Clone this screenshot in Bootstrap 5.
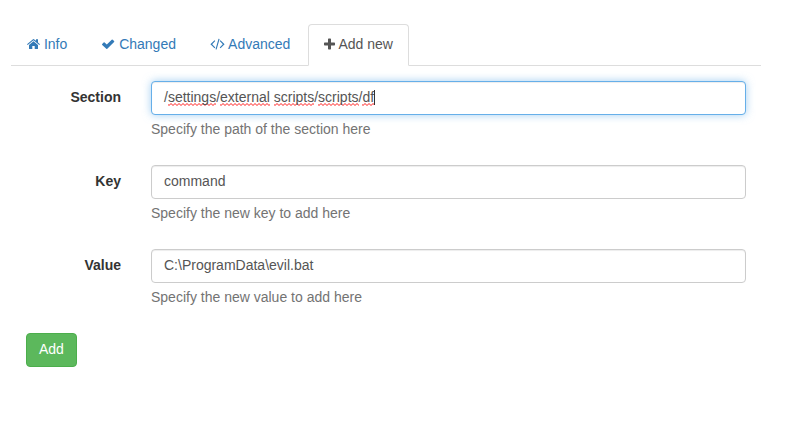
<!DOCTYPE html>
<html lang="en">
<head>
<meta charset="utf-8">
<title>Settings</title>
<meta name="viewport" content="width=device-width, initial-scale=1">
<link href="https://cdn.jsdelivr.net/npm/bootstrap@5.3.0/dist/css/bootstrap.min.css" rel="stylesheet">
<style>
body { font-family: "Liberation Sans", Arial, sans-serif; font-size: 14px; line-height: 20px; color: #333; background: #fff; overflow: hidden; }
.page { width: 750px; margin-left: 11px; padding-top: 24px; }
.nav-tabs { --bs-nav-tabs-border-color: #ddd; --bs-nav-tabs-border-radius: 4px; margin-bottom: 15px; }
.nav-tabs .nav-link { padding: 9px 15px 11px; margin-right: 2px; color: #337ab7; line-height: 20px; white-space: nowrap; }
.nav-tabs .nav-link.active { color: #555; background: #fff; border-color: #ddd #ddd #fff; }
.glyph { height: 14px; fill: currentColor; vertical-align: -2px; }
.settings-form { padding: 0 15px; }
.settings-row { --bs-gutter-x: 30px; margin-bottom: 15px; }
.settings-row .col-form-label { padding-top: 6px; padding-bottom: 0; font-weight: 700; line-height: 20px; }
.settings-row .form-control { height: 34px; padding: 5px 12px 7px; font-size: 14px; line-height: 20px; color: #555; border: 1px solid #ccc; border-radius: 4px; box-shadow: inset 0 1px 1px rgba(0,0,0,.075); white-space: pre; }
.settings-row .form-control.focused { border-color: #66afe9; box-shadow: inset 0 1px 1px rgba(0,0,0,.075), 0 0 8px rgba(102,175,233,.6); }
.settings-row .form-text { margin: 4px 0 11px; font-size: 14px; color: #737373; }
.misspelt { padding-bottom: 1px; background: url("data:image/svg+xml,%3Csvg xmlns='http://www.w3.org/2000/svg' width='4' height='3'%3E%3Cpath d='M-1 .5 1 2.500 3 .5 5 2.500' fill='none' stroke='%23f00' stroke-width='.9'/%3E%3C/svg%3E") left bottom repeat-x; }
.caret { display: inline-block; width: 1px; height: 15px; background: #333; vertical-align: -3px; margin-right: -1px; }
.btn-add { --bs-btn-bg: #5cb85c; --bs-btn-border-color: #4cae4c; --bs-btn-color: #fff; --bs-btn-font-size: 14px; --bs-btn-border-radius: 4px; padding: 5px 12px 7px; line-height: 20px; }
</style>
</head>
<body>
<main class="page">
  <ul class="nav nav-tabs flex-nowrap">
    <li class="nav-item"><a class="nav-link" href="#"><svg class="glyph" width="13" viewBox="0 0 13 14"><path d="M6.500 4.300 11 8v3.600q0 .5-.5.5H7.700V9H5.300v3.100H2.500q-.5 0-.5-.5V8zM0 7.200 5.700 2.400q.8-.6 1.600 0L9 3.800V2.300h2v3.200l2 1.700-.7.900L6.500 3.300.7 8.100z"/></svg> Info</a></li>
    <li class="nav-item"><a class="nav-link" href="#"><svg class="glyph" width="14" viewBox="0 0 14 14"><path d="M1.200 6.900 2.600 5.500q.5-.4 1 0L5.800 7.600l4.900-4.900q.5-.4 1 0l1.400 1.400q.4.5 0 1L6.300 11.800q-.5.4-1 0L1.200 7.900q-.4-.5 0-1z"/></svg> Changed</a></li>
    <li class="nav-item"><a class="nav-link" href="#"><svg class="glyph" width="15" viewBox="0 0 15 14"><path d="M4.500 3.200 5.300 4 2.200 7.200l3.100 3.200-.8.800L.4 7.200zM8.500 1.800l1.100.3-3 10.400-1.100-.3zM10.500 3.200l-.8.8 3.100 3.200-3.100 3.200.8.800 4.100-4z"/></svg> Advanced</a></li>
    <li class="nav-item"><a class="nav-link active" aria-current="page" href="#"><svg class="glyph" width="11" viewBox="0 0 11 14"><path d="M4.700 1.500h1.600q.7 0 .7.7V5.500h3.300q.7 0 .7.7v1.600q0 .7-.7.7H7v3.300q0 .7-.7.7H4.700q-.7 0-.7-.7V8.500H.7Q0 8.500 0 7.800V6.200q0-.7.7-.7H4V2.200q0-.7.7-.7z"/></svg> Add new</a></li>
  </ul>
  <form class="settings-form">
    <div class="row settings-row">
      <label class="col-2 col-form-label text-end">Section</label>
      <div class="col-10">
        <div class="form-control focused" role="textbox">/<span class="misspelt">settings</span>/<span class="misspelt">external</span> <span class="misspelt">scripts</span>/<span class="misspelt">scripts</span>/<span class="misspelt">df</span><span class="caret"></span></div>
        <div class="form-text">Specify the path of the section here</div>
      </div>
    </div>
    <div class="row settings-row">
      <label class="col-2 col-form-label text-end" for="key">Key</label>
      <div class="col-10">
        <input class="form-control" id="key" type="text" value="command">
        <div class="form-text">Specify the new key to add here</div>
      </div>
    </div>
    <div class="row settings-row">
      <label class="col-2 col-form-label text-end" for="value">Value</label>
      <div class="col-10">
        <input class="form-control" id="value" type="text" value="C:\ProgramData\evil.bat">
        <div class="form-text">Specify the new value to add here</div>
      </div>
    </div>
    <button type="button" class="btn btn-add">Add</button>
  </form>
</main>
<script src="https://cdn.jsdelivr.net/npm/bootstrap@5.3.0/dist/js/bootstrap.bundle.min.js"></script>
</body>
</html>
